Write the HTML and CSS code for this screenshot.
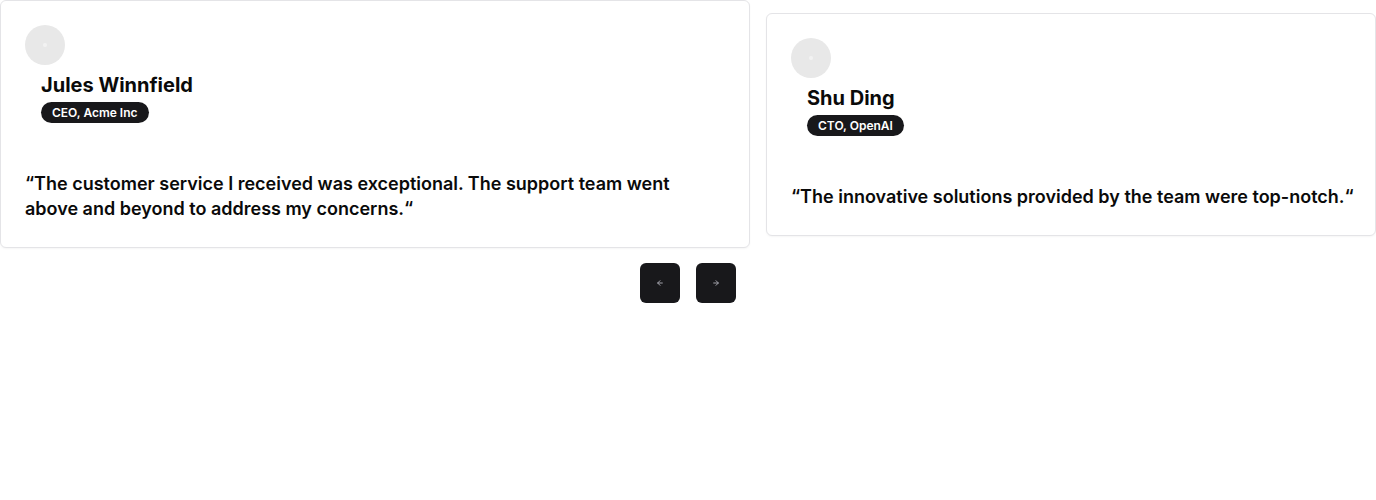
FILE: index.html
```html
<!DOCTYPE html>
<html lang="en">
<head>
<meta charset="utf-8">
<title>Testimonials</title>
<link rel="stylesheet" href="styles.css">
</head>
<body>
<div class="carousel">
  <div class="track">
    <article class="card">
      <div class="avatar"><span class="dot"></span></div>
      <div class="person">
        <h3 class="name">Jules Winnfield</h3>
        <span class="badge">CEO, Acme Inc</span>
      </div>
      <p class="quote">“The customer service I received was exceptional. The support team went above and beyond to address my concerns.“</p>
    </article>
    <article class="card">
      <div class="avatar"><span class="dot"></span></div>
      <div class="person">
        <h3 class="name">Shu Ding</h3>
        <span class="badge">CTO, OpenAI</span>
      </div>
      <p class="quote quote--short">“The innovative solutions provided by the team were top-notch.“</p>
    </article>
  </div>
  <div class="nav">
    <button class="nav-btn" aria-label="Previous">
      <svg viewBox="0 0 24 24" width="8" height="8" fill="none" stroke="currentColor" stroke-width="3" stroke-linecap="round" stroke-linejoin="round"><path d="M19 12H5"/><path d="M12 19l-7-7 7-7"/></svg>
    </button>
    <button class="nav-btn" aria-label="Next">
      <svg viewBox="0 0 24 24" width="8" height="8" fill="none" stroke="currentColor" stroke-width="3" stroke-linecap="round" stroke-linejoin="round"><path d="M5 12h14"/><path d="M12 5l7 7-7 7"/></svg>
    </button>
  </div>
</div>
</body>
</html>
```

FILE: styles.css
```css
* { box-sizing: border-box; }
html, body { margin: 0; padding: 0; background: #fff; }
body {
  font-family: Inter, "Liberation Sans", sans-serif;
  color: #0a0a0a;
  overflow: hidden;
}
.carousel { width: 750px; }
.track {
  width: 100vw;
  display: flex;
  align-items: center;
  gap: 16px;
}
.card {
  flex: 0 1 auto;
  min-width: 0;
  max-width: 750px;
  border: 1px solid #e4e4e7;
  border-radius: 6px;
  background: #fff;
  box-shadow: 0 1px 2px rgba(0,0,0,0.04);
  padding: 24px 24px 26px;
}
.avatar {
  width: 40px;
  height: 40px;
  border-radius: 50%;
  background: #e8e8e8;
  display: flex;
  align-items: center;
  justify-content: center;
}
.dot {
  width: 4px;
  height: 4px;
  border-radius: 50%;
  background: #f2f2f2;
}
.person {
  padding: 6px 16px 0;
  display: flex;
  flex-direction: column;
  align-items: flex-start;
}
.name {
  margin: 0;
  font-size: 20px;
  line-height: 28px;
  font-weight: 700;
}
.badge {
  margin-top: 3px;
  background: #18181b;
  color: #fff;
  font-size: 12px;
  font-weight: 600;
  line-height: 21px;
  padding: 0 11px;
  border-radius: 999px;
}
.quote {
  margin: 48px 0 0;
  font-size: 18px;
  line-height: 25px;
  font-weight: 600;
}
.quote--short { white-space: nowrap; }
.nav {
  display: flex;
  justify-content: flex-end;
  gap: 16px;
  padding: 15px 14px 0 0;
}
.nav-btn {
  width: 40px;
  height: 40px;
  border: none;
  border-radius: 6px;
  background: #18181b;
  color: #a1a1aa;
  display: flex;
  align-items: center;
  justify-content: center;
  padding: 0;
}
```
